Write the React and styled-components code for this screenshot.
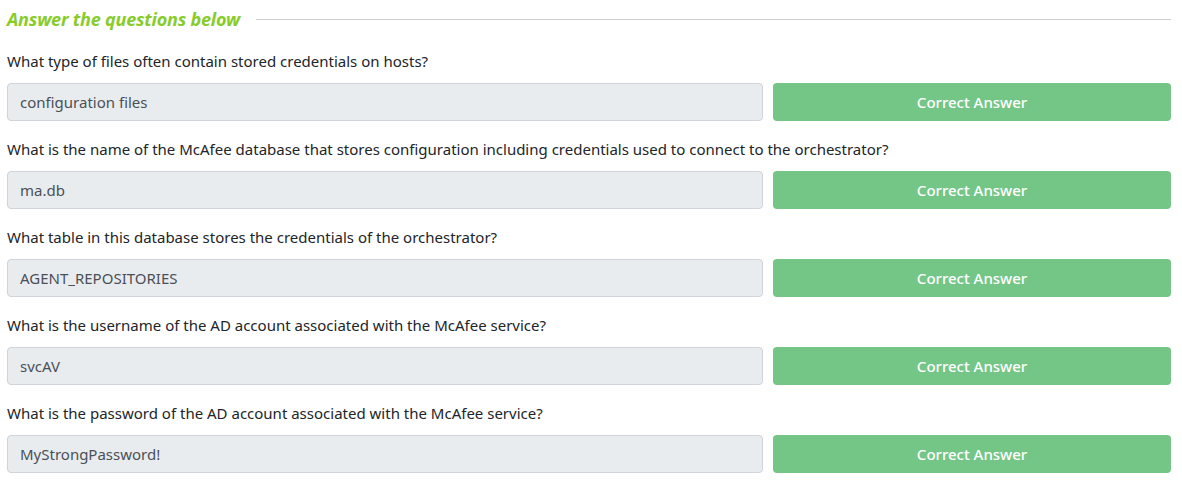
import styled, { createGlobalStyle } from 'styled-components';

const GlobalStyle = createGlobalStyle`
  html, body {
    margin: 0;
    padding: 0;
    background: #ffffff;
  }
  body {
    font-family: 'Noto Sans', 'Open Sans', sans-serif;
  }
`;

const Page = styled.div`
  width: 1164px;
  padding: 5px 11px 0 7px;
`;

const HeadingRow = styled.div`
  display: flex;
  align-items: center;
  gap: 16px;
  height: 28px;
  margin-bottom: 18px;
`;

const Heading = styled.h2`
  margin: 0;
  font-size: 18px;
  font-weight: 700;
  font-style: italic;
  color: #88cc2b;
  white-space: nowrap;
  letter-spacing: -0.2px;
`;

const Rule = styled.div`
  flex: 1;
  height: 1px;
  background: #cfcfcf;
`;

const Question = styled.div`
  margin-bottom: 18px;
`;

const Label = styled.div`
  font-size: 15px;
  color: #212529;
  line-height: 20px;
  margin-bottom: 12px;
`;

const AnswerRow = styled.div`
  display: grid;
  grid-template-columns: 756px 1fr;
  gap: 10px;
`;

const AnswerBox = styled.div`
  box-sizing: border-box;
  height: 38px;
  padding: 0 12px;
  display: flex;
  align-items: center;
  background: #e9ecef;
  border: 1px solid #ced4da;
  border-radius: 4px;
  font-size: 15px;
  color: #495057;
`;

const Button = styled.button`
  height: 38px;
  border: none;
  border-radius: 4px;
  background: #74c687;
  color: #ffffff;
  font-family: inherit;
  font-size: 15px;
  font-weight: 500;
  cursor: default;
`;

const items = [
  ['What type of files often contain stored credentials on hosts?', 'configuration files'],
  ['What is the name of the McAfee database that stores configuration including credentials used to connect to the orchestrator?', 'ma.db'],
  ['What table in this database stores the credentials of the orchestrator?', 'AGENT_REPOSITORIES'],
  ['What is the username of the AD account associated with the McAfee service?', 'svcAV'],
  ['What is the password of the AD account associated with the McAfee service?', 'MyStrongPassword!'],
];

export default function App() {
  return (
    <>
      <GlobalStyle />
      <Page>
        <HeadingRow>
          <Heading>Answer the questions below</Heading>
          <Rule />
        </HeadingRow>
        {items.map(([q, a]) => (
          <Question key={q}>
            <Label>{q}</Label>
            <AnswerRow>
              <AnswerBox>{a}</AnswerBox>
              <Button>Correct Answer</Button>
            </AnswerRow>
          </Question>
        ))}
      </Page>
    </>
  );
}
